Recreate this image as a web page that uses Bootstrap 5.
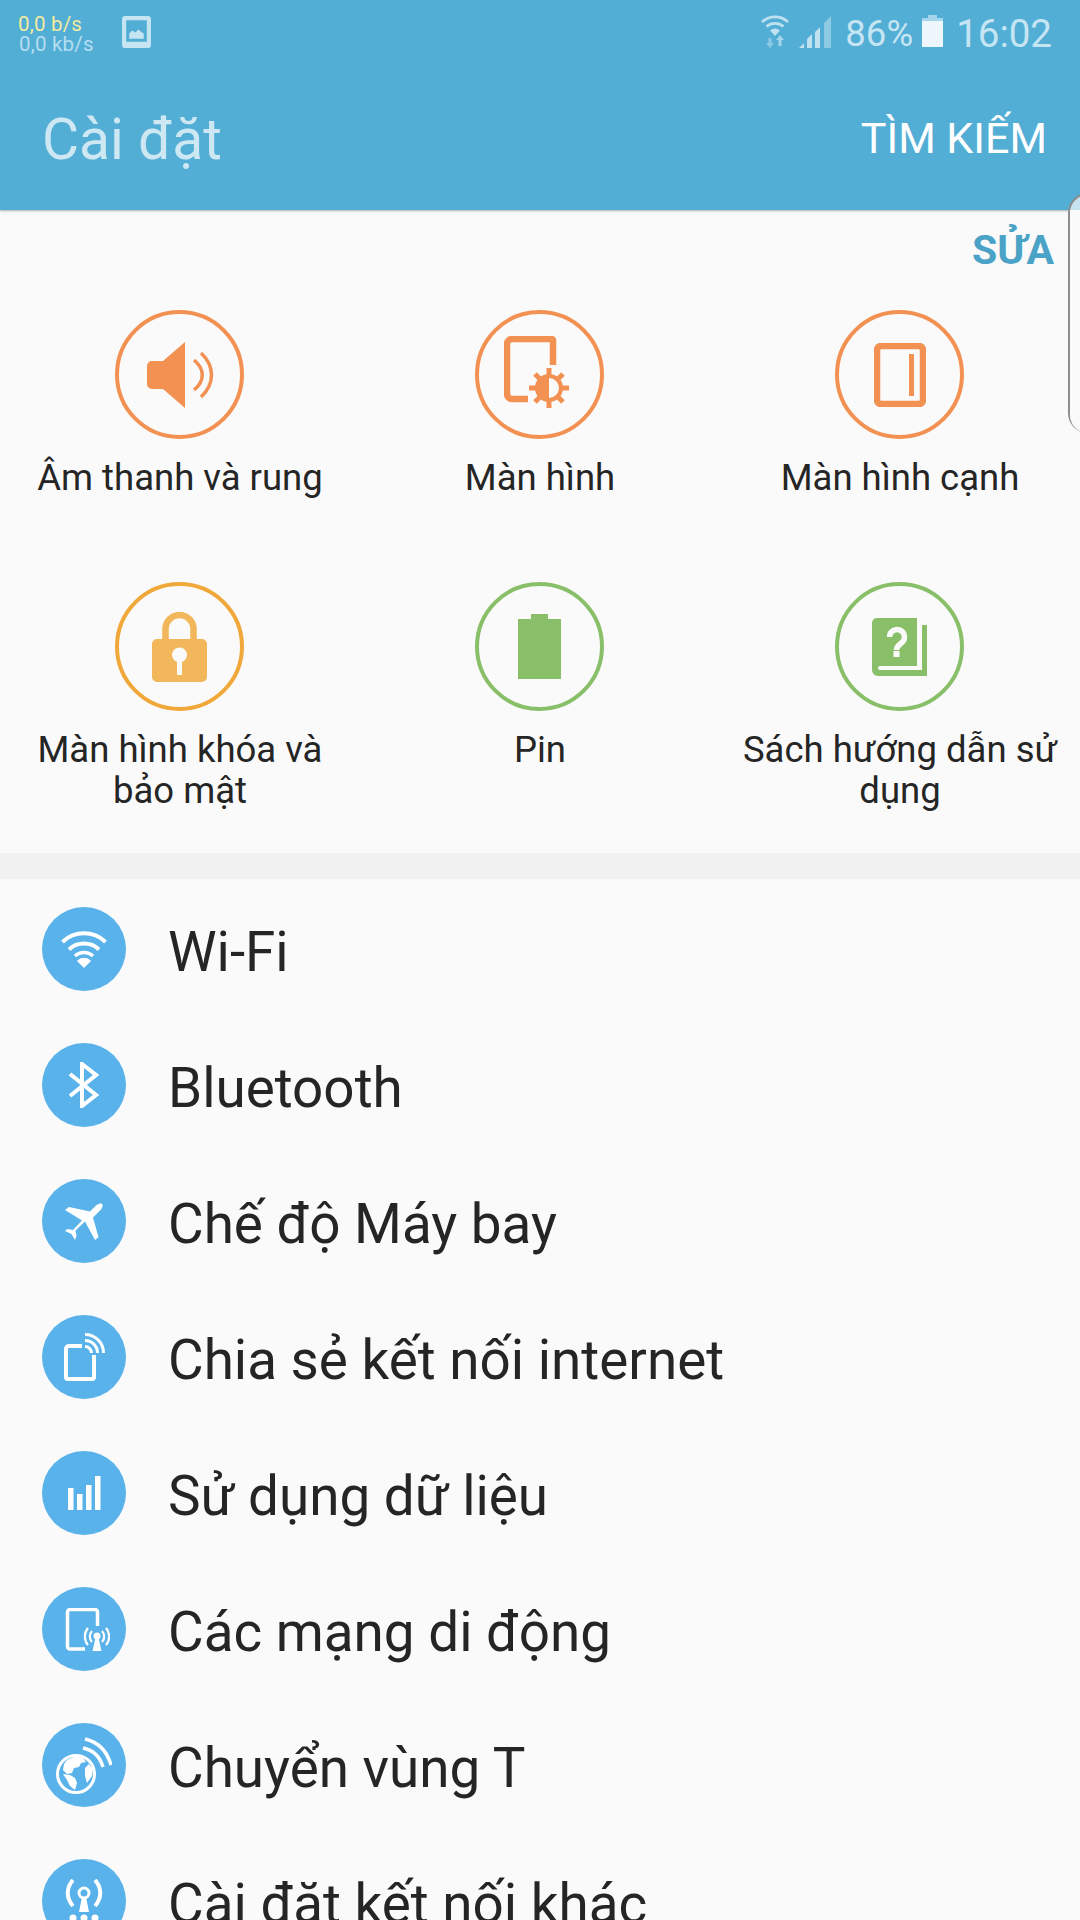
<!DOCTYPE html>
<html lang="vi">
<head>
    <meta charset="UTF-8">
    <meta name="viewport" content="width=device-width, initial-scale=1.0">
    <title>Cài đặt</title>
    <link rel="stylesheet" href="https://cdn.jsdelivr.net/npm/bootstrap@5.3.0/dist/css/bootstrap.min.css">
    <style>
        html, body { height: 1920px; overflow: hidden; }
        body { font-family: Roboto, "Noto Sans", sans-serif; background: #fafafa; color: #252525; }

        /* status bar + action bar */
        .app-head { background: #53aed6; height: 210px; box-shadow: 0 1px 2px rgba(0,0,0,.3); position: relative; }
        .status-row { height: 60px; padding: 14px 28px 0 18px; }
        .net-speed { font-size: 20.5px; line-height: 20px; width: 84px; letter-spacing: .2px; }
        .net-up { color: #f2eb9f; }
        .net-down { color: #b5def0; margin-left: 1px; }
        .gallery-ico { margin: 2px 0 0 20px; }
        .status-pct { font-size: 36.5px; line-height: 40px; color: #c6e5f2; }
        .status-time { font-size: 38.5px; line-height: 40px; color: #c6e5f2; }
        .wifi-ico { margin: 1px 10px 0 0; }
        .signal-ico { margin: 2px 14px 0 0; }
        .battery-ico { margin: 1px 13px 0 9px; }
        .action-row { height: 150px; padding: 0 33px 0 42px; }
        .page-name { font-size: 57px; color: #cde7f3; line-height: 60px; margin-top: 9px; }
        .search-btn { font-size: 43px; color: #fff; line-height: 50px; margin-top: 6px; }

        /* quick settings grid */
        .quick-panel { height: 643px; position: relative; }
        .edit-link { font-size: 41px; font-weight: 700; color: #4aa2c7; line-height: 44px; padding: 18px 26px 0 0; height: 60px; }
        .quick-grid { display: grid; grid-template-columns: repeat(3, 360px); margin-top: 40px; }
        .quick-cell { height: 272px; font-size: 36.5px; line-height: 41px; }
        .ring { width: 129px; height: 129px; border: 4px solid #f29152; border-radius: 50%; margin: 0 1px 18px 0; }
        .ring-lock { border-color: #f0a83a; }
        .ring-green { border-color: #88bf68; }
        .quick-label { width: 340px; }

        /* handle of the edge panel */
        .edge-handle { position: absolute; left: 1068px; top: -17px; width: 30px; height: 240px; border: 2px solid #8d8d8d; border-radius: 20px 0 0 20px; background: rgba(250,250,250,.7); }
        .edge-fill { height: 223px; margin-top: 15px; background: #fafafa; border-radius: 0 0 0 18px; }

        .section-gap { height: 26px; background: #f1f1f1; }

        /* settings list */
        .settings-list { padding-top: 2px; }
        .menu-row { height: 136px; padding-left: 42px; }
        .menu-ico { width: 84px; height: 84px; background: #5ab2ea; border-radius: 50%; margin-right: 42px; flex: none; }
        .menu-name { font-size: 54.8px; line-height: 64px; margin-top: 6px; }
    </style>
</head>
<body>
    <div class="app-head">
        <div class="status-row d-flex">
            <div class="net-speed">
                <div class="net-up">0,0 b/s</div>
                <div class="net-down">0,0 kb/s</div>
            </div>
            <svg class="gallery-ico" width="29" height="32" viewBox="0 0 28 31">
                <path fill="#c6e5f2" fill-rule="evenodd" d="M3 0h22a3 3 0 0 1 3 3v25a3 3 0 0 1-3 3H3a3 3 0 0 1-3-3V3a3 3 0 0 1 3-3zm1 4v21h20V4z"/>
                <path fill="#c6e5f2" d="M7 22v-5l3-3 3 2 3-3 2 2 3 2v5z"/>
            </svg>
            <div class="ms-auto d-flex align-items-start">
                <!-- wifi with activity arrows -->
                <svg class="wifi-ico" width="28" height="33" viewBox="0 0 28 33">
                    <g fill="none" stroke="#bfe1f0" stroke-width="2.6">
                        <path d="M1 7a19 19 0 0 1 26 0"/>
                        <path d="M5.500 11.500a13 13 0 0 1 17 0"/>
                    </g>
                    <path fill="#bfe1f0" d="M9 15.500a8 8 0 0 1 10 0L14 21z"/>
                    <path fill="#8ccae3" d="M9 33l-4-5h2.500v-5h3v5H13z"/>
                    <path fill="#a5d5ea" d="M19 20l4 5h-2.500v6h-3v-6H15z"/>
                </svg>
                <!-- signal bars -->
                <svg class="signal-ico" width="32" height="32" viewBox="0 0 32 32">
                    <path fill="#bfe1f0" d="M0 32l5-5v5zM8 32v-9l5-5v14zM16 32V16l5-5v21z"/>
                    <path fill="#8ccae3" d="M25 32V7l7-7v32z"/>
                </svg>
                <span class="status-pct">86%</span>
                <!-- battery -->
                <svg class="battery-ico" width="21" height="32" viewBox="0 0 21 32">
                    <path fill="#a5d5ea" d="M6 0h9v3h6v3H0V3h6z"/>
                    <path fill="#ecf6fb" d="M0 6h21v26H0z"/>
                </svg>
                <span class="status-time">16:02</span>
            </div>
        </div>
        <div class="action-row d-flex justify-content-between align-items-center">
            <span class="page-name">Cài đặt</span>
            <span class="search-btn">TÌM KIẾM</span>
        </div>
    </div>

    <div class="quick-panel">
        <div class="edit-link text-end">SỬA</div>
        <div class="quick-grid">
            <div class="quick-cell d-flex flex-column align-items-center text-center">
                <div class="ring d-flex align-items-center justify-content-center">
                    <svg width="68" height="66" viewBox="0 0 68 66">
                        <path fill="#f29152" d="M39 0v66L17 47H6a5 5 0 0 1-5-5V24a5 5 0 0 1 5-5h11z"/>
                        <g fill="none" stroke="#f29152" stroke-width="3.500">
                            <path d="M48 18c11 9 11 21 0 30"/>
                            <path d="M55 11c14 13 14 31 0 44"/>
                        </g>
                    </svg>
                </div>
                <div class="quick-label">Âm thanh và rung</div>
            </div>
            <div class="quick-cell d-flex flex-column align-items-center text-center">
                <div class="ring d-flex align-items-center justify-content-center">
                    <svg width="72" height="77" viewBox="0 0 72 77">
                        <path fill="none" stroke="#f29152" stroke-width="6.500" d="M24 63H8a5 5 0 0 1-5-5V8a5 5 0 0 1 5-5h40a2 2 0 0 1 1 1v25"/>
                        <g fill="none" stroke="#f29152" stroke-width="5">
                            <path d="M45 32v7M45 65v7M25 52h7M58 52h7M31 38l5 5M54 61l5 5M31 66l5-5M54 43l5-5"/>
                        </g>
                        <circle cx="45" cy="52" r="12" fill="#fafafa" stroke="#f29152" stroke-width="4"/>
                        <path fill="#f29152" d="M45 40a12 12 0 0 0 0 24z"/>
                    </svg>
                </div>
                <div class="quick-label">Màn hình</div>
            </div>
            <div class="quick-cell d-flex flex-column align-items-center text-center">
                <div class="ring d-flex align-items-center justify-content-center">
                    <svg width="52" height="64" viewBox="0 0 52 64">
                        <rect x="3" y="3" width="46" height="58" rx="4" fill="none" stroke="#f29152" stroke-width="6.500"/>
                        <path fill="#f29152" d="M35 11h5v42h-5z"/>
                    </svg>
                </div>
                <div class="quick-label">Màn hình cạnh</div>
            </div>
            <div class="quick-cell d-flex flex-column align-items-center text-center">
                <div class="ring ring-lock d-flex align-items-center justify-content-center">
                    <svg width="55" height="70" viewBox="0 0 55 70">
                        <path fill="none" stroke="#f2b75a" stroke-width="6.500" d="M13.500 28V17a14 14 0 0 1 28 0v11"/>
                        <path fill="#f2b75a" fill-rule="evenodd" d="M5 27h45a5 5 0 0 1 5 5v33a5 5 0 0 1-5 5H5a5 5 0 0 1-5-5V32a5 5 0 0 1 5-5zm20 23v13h5V50a7.500 7.500 0 1 0-5 0z"/>
                    </svg>
                </div>
                <div class="quick-label">Màn hình khóa và bảo mật</div>
            </div>
            <div class="quick-cell d-flex flex-column align-items-center text-center">
                <div class="ring ring-green d-flex align-items-center justify-content-center">
                    <svg width="43" height="65" viewBox="0 0 43 65">
                        <path fill="#88bf68" d="M13 0h17v5h13v60H0V5h13z"/>
                    </svg>
                </div>
                <div class="quick-label">Pin</div>
            </div>
            <div class="quick-cell d-flex flex-column align-items-center text-center">
                <div class="ring ring-green d-flex align-items-center justify-content-center">
                    <svg width="55" height="58" viewBox="0 0 55 58">
                        <path fill="#88bf68" d="M5 0H45V48H8a2 2 0 0 0 0 4H50V7h5V58H6a6 6 0 0 1-6-6V5a5 5 0 0 1 5-5z"/>
                        <path fill="none" stroke="#fafafa" stroke-width="5.500" d="M17.500 19a7.500 7.500 0 1 1 12 6c-3 2.400-5 3.500-5 7"/>
                        <path fill="#fafafa" d="M21.500 33h6v6h-6z"/>
                    </svg>
                </div>
                <div class="quick-label">Sách hướng dẫn sử dụng</div>
            </div>
        </div>
        <div class="edge-handle"><div class="edge-fill"></div></div>
    </div>

    <div class="section-gap"></div>

    <div class="settings-list">
        <div class="menu-row d-flex align-items-center">
            <div class="menu-ico d-flex align-items-center justify-content-center">
                <svg width="46" height="37" viewBox="0 0 46 37">
                    <g fill="none" stroke="#fff" stroke-width="4">
                        <path d="M1.500 11a31 31 0 0 1 43 0"/>
                        <path d="M8 18.500a22 22 0 0 1 30 0"/>
                    </g>
                    <path fill="none" stroke="#fff" stroke-width="3.500" d="M14 25a13 13 0 0 1 18 0"/>
                    <path fill="#fff" d="M16 30a9 9 0 0 1 14 0L23 37z"/>
                </svg>
            </div>
            <span class="menu-name">Wi-Fi</span>
        </div>
        <div class="menu-row d-flex align-items-center">
            <div class="menu-ico d-flex align-items-center justify-content-center">
                <svg width="30" height="46" viewBox="0 0 30 46">
                    <path fill="none" stroke="#fff" stroke-width="4" d="M1 12l26 21-14 11V2l14 11L1 34"/>
                </svg>
            </div>
            <span class="menu-name">Bluetooth</span>
        </div>
        <div class="menu-row d-flex align-items-center">
            <div class="menu-ico d-flex align-items-center justify-content-center">
                <svg width="38" height="37" viewBox="0 0 38 37">
                    <path fill="#fff" d="M37 .8C38 1.600 38 4 36 6.500L28 14.500 33.500 34 30 37 20 18.500 10.500 27.500 11.500 33 10 37 6.500 31 0 28 2.500 26 8 27 17 17.500 0 7 4 4 25 8.500 31.500 2C33.500.5 36 0 37 .8z"/>
                </svg>
            </div>
            <span class="menu-name">Chế độ Máy bay</span>
        </div>
        <div class="menu-row d-flex align-items-center">
            <div class="menu-ico d-flex align-items-center justify-content-center">
                <svg width="41" height="48" viewBox="0 0 41 48">
                    <path fill="none" stroke="#fff" stroke-width="4" d="M18 13H5a3 3 0 0 0-3 3v28a2 2 0 0 0 2 2h24a2 2 0 0 0 2-2V22"/>
                    <g fill="none" stroke="#fff" stroke-width="3">
                        <path d="M21 1.500a18.500 18.500 0 0 1 18.500 18.500"/>
                        <path d="M21 7.500a12.500 12.500 0 0 1 12.500 12.500"/>
                        <path d="M21 13.500a6.500 6.500 0 0 1 6.500 6.500"/>
                    </g>
                </svg>
            </div>
            <span class="menu-name">Chia sẻ kết nối internet</span>
        </div>
        <div class="menu-row d-flex align-items-center">
            <div class="menu-ico d-flex align-items-center justify-content-center">
                <svg width="33" height="34" viewBox="0 0 33 34">
                    <path fill="#fff" d="M0 12h5.500v22H0zM9 18h5.500v16H9zM18 9h5.500v25H18zM27 0h5.500v34H27z"/>
                </svg>
            </div>
            <span class="menu-name">Sử dụng dữ liệu</span>
        </div>
        <div class="menu-row d-flex align-items-center">
            <div class="menu-ico d-flex align-items-center justify-content-center">
                <svg width="52" height="43" viewBox="-8 0 52 43">
                    <path fill="none" stroke="#fff" stroke-width="3.500" d="M19 41H4a2.500 2.500 0 0 1-2.500-2.500V4A2.500 2.500 0 0 1 4 1.500h25A2.500 2.500 0 0 1 31.500 4v14"/>
                    <circle cx="31" cy="28" r="3.500" fill="#fff"/>
                    <path fill="#fff" d="M29.500 30h3l3 13h-9z"/>
                    <g fill="none" stroke="#fff" stroke-width="2.200">
                        <path d="M26 23a8 8 0 0 0 0 11M36 23a8 8 0 0 1 0 11"/>
                        <path d="M22 20a13 13 0 0 0 0 17M40 20a13 13 0 0 1 0 17"/>
                    </g>
                </svg>
            </div>
            <span class="menu-name">Các mạng di động</span>
        </div>
        <div class="menu-row d-flex align-items-center">
            <div class="menu-ico d-flex align-items-center justify-content-center">
                <svg width="56" height="57" viewBox="0 0 56 57">
                    <circle cx="20" cy="37" r="18.500" fill="none" stroke="#fff" stroke-width="3"/>
                    <path fill="#fff" d="M11 23l9-4 7 2 3 4-5 1-2 4-5 1-2 5-5 1-4-4 1-6zM29 31l4-4 4 5-1 7-5 7-2-7zM7 37l7 1 5 3 2 5-2 7-5-4-3-6z"/>
                    <g fill="none" stroke="#fff" stroke-width="3.500">
                        <path d="M27 11c10 2 17 9 20 19"/>
                        <path d="M29 2c13 3 22 12 26 26"/>
                    </g>
                </svg>
            </div>
            <span class="menu-name">Chuyển vùng T</span>
        </div>
        <div class="menu-row d-flex align-items-center">
            <div class="menu-ico d-flex align-items-center justify-content-center">
                <svg width="38" height="44" viewBox="0 0 38 44">
                    <circle cx="19" cy="14" r="5" fill="none" stroke="#fff" stroke-width="3"/>
                    <path fill="#fff" d="M17 18h4l3 15H14z"/>
                    <g fill="none" stroke="#fff" stroke-width="4">
                        <path d="M8 1c-7 8-7 18 0 26M30 1c7 8 7 18 0 26"/>
                    </g>
                    <circle cx="8" cy="39" r="3.500" fill="#fff"/>
                    <circle cx="19" cy="39" r="3.500" fill="#fff"/>
                    <circle cx="30" cy="39" r="3.500" fill="#fff"/>
                </svg>
            </div>
            <span class="menu-name">Cài đặt kết nối khác</span>
        </div>
    </div>
    <script src="https://cdn.jsdelivr.net/npm/bootstrap@5.3.0/dist/js/bootstrap.bundle.min.js"></script>
</body>
</html>
